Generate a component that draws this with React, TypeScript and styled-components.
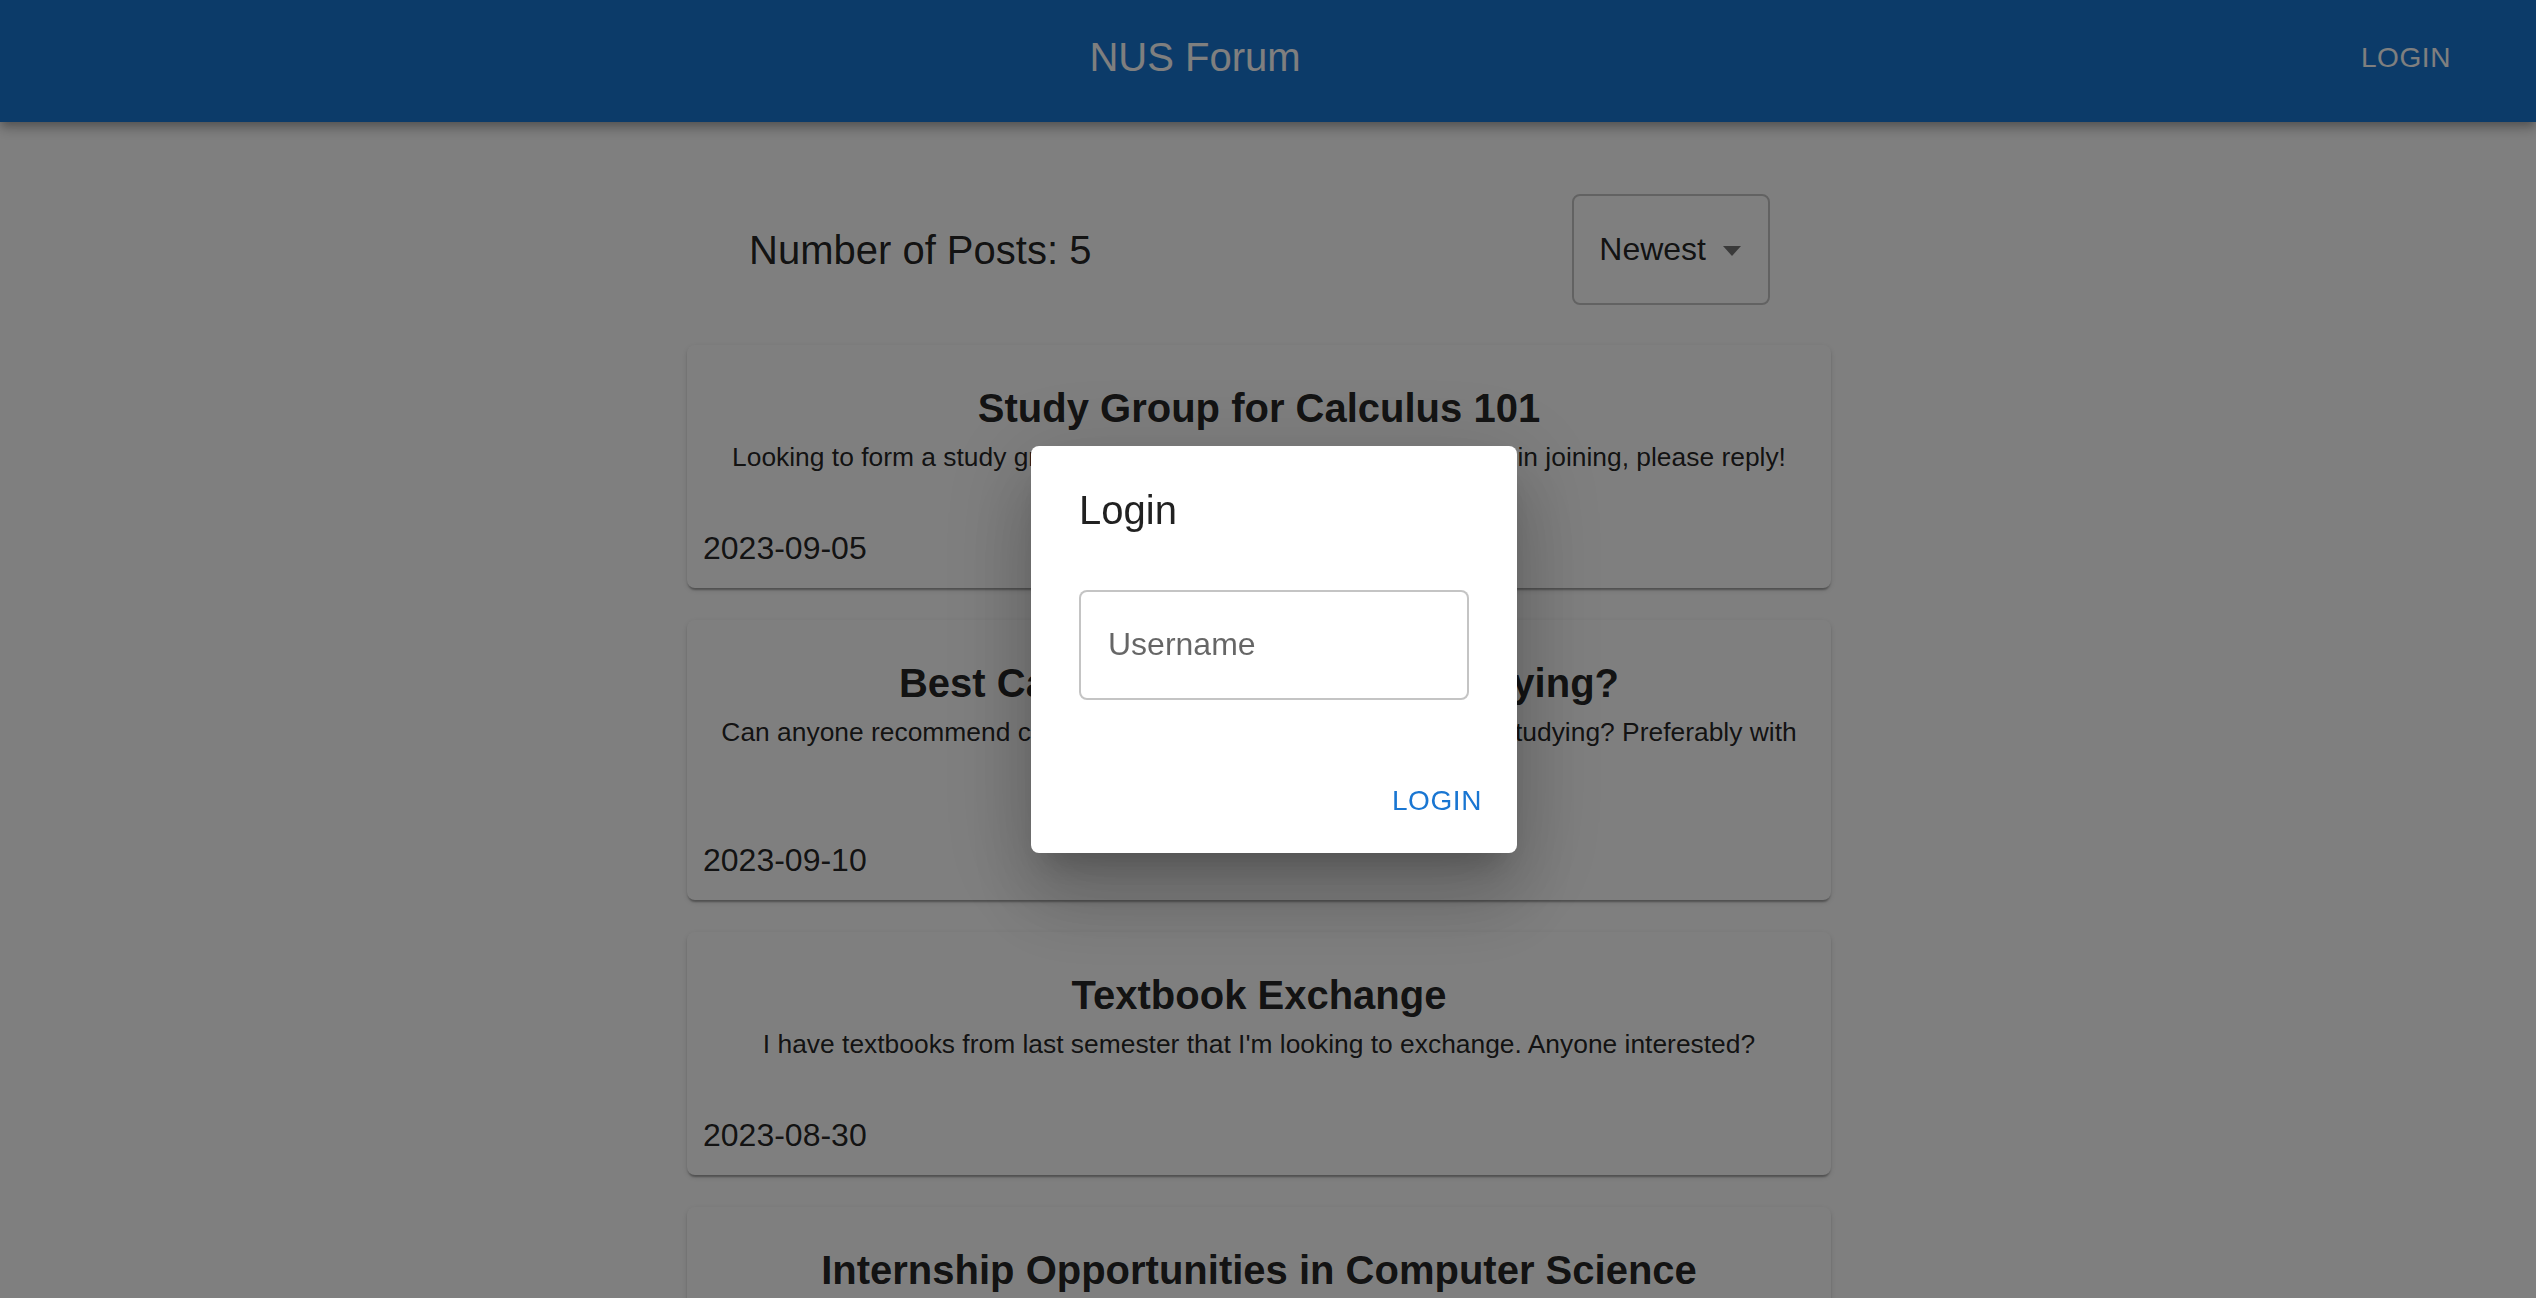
import React from 'react'
import styled, { createGlobalStyle } from 'styled-components'

type Post = {
  id: number
  title: string
  body: string
  date: string
}

const posts: Post[] = [
  {
    id: 1,
    title: 'Study Group for Calculus 101',
    body: "Looking to form a study group for Calculus 101. If you're interested in joining, please reply!",
    date: '2023-09-05',
  },
  {
    id: 2,
    title: 'Best Cafes around NUS for Studying?',
    body: 'Can anyone recommend cafes around campus which are good for studying? Preferably with power outlets and good Wi-Fi.',
    date: '2023-09-10',
  },
  {
    id: 3,
    title: 'Textbook Exchange',
    body: "I have textbooks from last semester that I'm looking to exchange. Anyone interested?",
    date: '2023-08-30',
  },
  {
    id: 4,
    title: 'Internship Opportunities in Computer Science',
    body: 'Does anyone know of companies offering internships for Computer Science students this winter?',
    date: '2023-09-01',
  },
  {
    id: 5,
    title: 'Lost Student Card',
    body: 'I lost my student card near the library yesterday. Please let me know if you found it.',
    date: '2023-08-28',
  },
]

const App = () => {
  return (
    <>
      <GlobalStyle />
      <Header>
        <Brand>NUS Forum</Brand>
        <TextButton tone="light">Login</TextButton>
      </Header>

      <Main>
        <Container>
          <ListHeader>
            <Count>Number of Posts: {posts.length}</Count>
            <SortSelect>
              <span>Newest</span>
              <svg width="18" height="10" viewBox="0 0 18 10">
                <polygon points="0,0 18,0 9,10" fill="rgba(0,0,0,0.54)" />
              </svg>
            </SortSelect>
          </ListHeader>

          {posts.map((post) => (
            <PostCard key={post.id}>
              <PostTitle>{post.title}</PostTitle>
              <PostBody>{post.body}</PostBody>
              <PostDate dateTime={post.date}>{post.date}</PostDate>
            </PostCard>
          ))}
        </Container>
      </Main>

      <Backdrop>
        <Dialog role="dialog">
          <DialogTitle>Login</DialogTitle>
          <DialogContent>
            <UsernameInput placeholder="Username" />
          </DialogContent>
          <DialogActions>
            <TextButton tone="primary">Login</TextButton>
          </DialogActions>
        </Dialog>
      </Backdrop>
    </>
  )
}

export default App

const GlobalStyle = createGlobalStyle`
  html, body {
    margin: 0;
    padding: 0;
    overflow: hidden;
    background: #fff;
    font-family: "Liberation Sans", Arial, Helvetica, sans-serif;
    color: rgba(0, 0, 0, 0.87);
  }

  * {
    box-sizing: border-box;
  }
`

const Header = styled.header`
  display: flex;
  align-items: center;
  height: 122px;
  padding: 0 66px 8px 48px;
  background: #1976d2;
  color: #fff;
  box-shadow: 0px 4px 8px -2px rgba(0, 0, 0, 0.2), 0px 8px 10px 0px rgba(0, 0, 0, 0.14),
    0px 2px 20px 0px rgba(0, 0, 0, 0.12);
  position: relative;
  z-index: 1;
`

const Brand = styled.h1`
  flex: 1;
  margin: 0;
  text-align: center;
  font-size: 40px;
  font-weight: 400;
  line-height: 64px;
`

const TextButton = styled.button<{ tone: 'light' | 'primary' }>`
  min-width: 128px;
  padding: 12px 16px;
  border: 0;
  border-radius: 8px;
  background: transparent;
  font-family: inherit;
  font-size: 28px;
  font-weight: 400;
  line-height: 49px;
  letter-spacing: 0.6px;
  text-transform: uppercase;
  color: ${({ tone }) => (tone === 'light' ? '#fff' : '#1976d2')};
  cursor: pointer;
`

const Main = styled.main`
  padding-right: 18px;
`

const Container = styled.div`
  width: 1144px;
  margin: 0 auto;
`

const ListHeader = styled.div`
  display: flex;
  align-items: center;
  justify-content: space-between;
  margin: 72px 0 40px;
  padding: 0 61px 0 62px;
`

const Count = styled.h2`
  margin: 0;
  font-size: 40px;
  font-weight: 400;
  line-height: 1.2;
`

const SortSelect = styled.div`
  display: flex;
  align-items: center;
  gap: 17px;
  height: 111px;
  padding: 0 27px 0 25px;
  border: 2px solid rgba(0, 0, 0, 0.23);
  border-radius: 8px;
  font-size: 32px;

  & svg {
    margin-top: 2px;
  }
`

const PostCard = styled.article`
  display: flex;
  flex-direction: column;
  margin-bottom: 32px;
  padding: 16px;
  background: #fff;
  border-radius: 8px;
  box-shadow: 0px 4px 2px -2px rgba(0, 0, 0, 0.2), 0px 2px 2px 0px rgba(0, 0, 0, 0.14),
    0px 2px 6px 0px rgba(0, 0, 0, 0.12);
`

const PostTitle = styled.h3`
  margin: 23px 0 7px;
  text-align: center;
  font-size: 40px;
  font-weight: 700;
  line-height: 48px;
`

const PostBody = styled.p`
  margin: 0 0 47px;
  text-align: center;
  font-size: 26.4px;
  line-height: 37.8px;
`

const PostDate = styled.time`
  font-size: 32px;
  line-height: 48px;
`

const Backdrop = styled.div`
  position: fixed;
  inset: 0;
  z-index: 10;
  display: flex;
  align-items: center;
  justify-content: center;
  padding-left: 12px;
  background: rgba(0, 0, 0, 0.5);
`

const Dialog = styled.div`
  display: flex;
  flex-direction: column;
  width: 486px;
  background: #fff;
  border-radius: 8px;
  box-shadow: 0px 22px 30px -14px rgba(0, 0, 0, 0.2), 0px 48px 76px 6px rgba(0, 0, 0, 0.14),
    0px 18px 92px 16px rgba(0, 0, 0, 0.12);
`

const DialogTitle = styled.h2`
  margin: 0;
  padding: 32px 48px;
  font-size: 40px;
  font-weight: 400;
  line-height: 64px;
`

const DialogContent = styled.div`
  padding: 0 48px 40px;
`

const UsernameInput = styled.input`
  display: block;
  width: 100%;
  height: 110px;
  margin: 16px 0 8px;
  padding: 0 27px;
  border: 2px solid rgba(0, 0, 0, 0.23);
  border-radius: 8px;
  font-family: inherit;
  font-size: 32px;
  color: rgba(0, 0, 0, 0.87);
  outline: none;

  &::placeholder {
    color: rgba(0, 0, 0, 0.6);
  }
`

const DialogActions = styled.div`
  display: flex;
  justify-content: flex-end;
  padding: 16px;
`
